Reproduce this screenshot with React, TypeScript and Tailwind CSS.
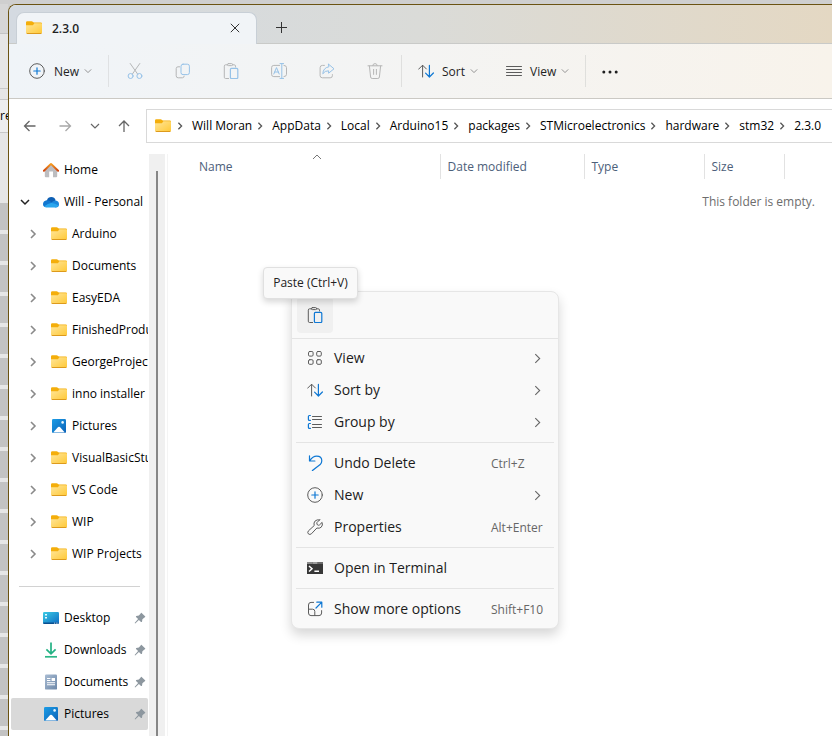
import type { ReactNode } from "react";

const GRAY = "#5c5c5c";
const BLUE = "#0f78d4";

type IconProps = { className?: string };

function FolderIcon({ className = "" }: IconProps) {
  return (
    <svg width="16" height="16" viewBox="0 0 16 16" className={"shrink-0 " + className} aria-hidden="true">
      <defs>
        <linearGradient id="folderFace" x1="0" y1="0" x2="1" y2="1">
          <stop offset="0" stopColor="#ffe69b" />
          <stop offset="1" stopColor="#ffc937" />
        </linearGradient>
      </defs>
      <path d="M0 2.6Q0 1.2 1.2 1.2H5.6Q6.3 1.2 6.8 1.7L7.8 2.6H14.8Q16 2.6 16 3.8V8H0Z" fill="#f4ae0b" />
      <path d="M0 5.2H6.2Q6.8 5.2 7.3 4.7L8.4 3.2H15Q16 3.2 16 4.1V12.6Q16 13.6 15 13.6H1Q0 13.6 0 12.6Z" fill="url(#folderFace)" />
      <path d="M0.2 12.6Q0.4 14 1.4 14H14.6Q15.6 14 15.8 12.8Q15.4 13.1 14.8 13.1H1.2Q0.6 13.1 0.2 12.6Z" fill="#dd9a1c" />
    </svg>
  );
}

function PicturesIcon() {
  return (
    <svg width="16" height="16" viewBox="0 0 16 16" className="shrink-0" aria-hidden="true">
      <defs>
        <linearGradient id="pictureSky" x1="0" y1="0" x2="1" y2="1">
          <stop offset="0" stopColor="#1c9de6" />
          <stop offset="1" stopColor="#0b62b8" />
        </linearGradient>
      </defs>
      <rect x="1" y="1" width="14" height="14" rx="1.2" fill="url(#pictureSky)" />
      <path d="M2.2 14.4L7.1 9.1Q8 8.2 8.9 9.1L13.8 14.4Z" fill="#fff" />
      <circle cx="11.6" cy="4.4" r="1.3" fill="#e8f6ff" />
    </svg>
  );
}

function HomeIcon() {
  return (
    <svg width="16" height="16" viewBox="0 0 16 16" className="shrink-0" aria-hidden="true">
      <defs>
        <linearGradient id="homeRoof" x1="0" y1="0" x2="0" y2="1">
          <stop offset="0" stopColor="#f69a1c" />
          <stop offset="1" stopColor="#cf4712" />
        </linearGradient>
      </defs>
      <path d="M1.8 7.4L8 1.8L14.2 7.4V14.2Q14.2 15.2 13.2 15.2H10V9.6H6.2V15.2H2.8Q1.8 15.2 1.8 14.2Z" fill="#bdbdc0" />
      <path d="M0.9 8.8L7.4 2.4Q8 1.9 8.6 2.4L15.1 8.8" fill="none" stroke="url(#homeRoof)" strokeWidth="2" strokeLinecap="round" />
    </svg>
  );
}

function CloudIcon() {
  return (
    <svg width="16" height="16" viewBox="0 0 16 16" className="shrink-0" aria-hidden="true">
      <path d="M3.9 6.4Q5 3.1 8.3 3.1Q11.6 3.1 12.6 6.3L9 10.5L3.5 8Z" fill="#0d5fb4" />
      <path d="M0 10.2Q0 6.6 3.8 6.2Q6.6 6 8.6 8.4L10 11L3 13.2Q0 12.8 0 10.2Z" fill="#1277d0" />
      <path d="M9 8Q10.8 6.2 12.8 6.4Q16 7 16 10.2Q16 13.4 12.8 13.4L6 11Z" fill="#1a86dc" />
      <path d="M1.2 12.3Q5 9.4 8.2 9.1Q11.6 8.9 15.6 11.6Q14.8 13.4 12.8 13.4H3.6Q2 13.4 1.2 12.3Z" fill="#2aa6ee" />
    </svg>
  );
}

function DesktopIcon() {
  return (
    <svg width="16" height="16" viewBox="0 0 16 16" className="shrink-0" aria-hidden="true">
      <defs>
        <linearGradient id="deskFill" x1="0" y1="0" x2="1" y2="1">
          <stop offset="0" stopColor="#3ccbe4" />
          <stop offset="1" stopColor="#0d6cc4" />
        </linearGradient>
      </defs>
      <rect x="0" y="2" width="16" height="12" rx="1.2" fill="url(#deskFill)" />
      <path d="M0.2 12.5H15.8Q15.8 14 14.8 14H1.2Q0.2 14 0.2 12.5Z" fill="#0a4f8f" />
      <path d="M2 4h2v1.6H2zM2 7h2v1.6H2z" fill="#e6fbff" />
      <path d="M11 12.8h1v.8h-1zM12.8 12.8h1v.8h-1zM14.4 12.8h.8v.8h-.8z" fill="#fff" />
    </svg>
  );
}

function DownloadsIcon() {
  return (
    <svg width="16" height="16" viewBox="0 0 16 16" className="shrink-0" fill="none" aria-hidden="true">
      <path d="M8 0.5V11.5M3.4 7.3L8 11.8L12.6 7.3" stroke="#22b183" strokeWidth="1.7" />
      <path d="M2 14.8H14" stroke="#2cb787" strokeWidth="1.7" />
    </svg>
  );
}

function DocumentsIcon() {
  return (
    <svg width="16" height="16" viewBox="0 0 16 16" className="shrink-0" aria-hidden="true">
      <defs>
        <linearGradient id="docFill" x1="0" y1="0" x2="1" y2="1">
          <stop offset="0" stopColor="#a9bcd3" />
          <stop offset="1" stopColor="#6c87a8" />
        </linearGradient>
      </defs>
      <rect x="2" y="0.4" width="12" height="15.2" rx="1.2" fill="url(#docFill)" />
      <path d="M4 4h3.4v1H4zM4 6h3.4v1H4zM8.6 4H12v3H8.6zM4 8.2h8v1H4zM4 10.3h8v1H4z" fill="#fff" />
    </svg>
  );
}

function PinIcon() {
  return (
    <svg width="12" height="12" viewBox="0 0 12 12" className="shrink-0" aria-hidden="true">
      <path d="M7.4 0.8L11.3 4.6Q11.4 5.4 10.5 5.4L8.4 7.2L8 9.7Q7.6 10.3 7 9.9L4.9 7.9L1.2 11.4L0.6 10.9L4.1 7.1L2 5Q1.7 4.4 2.3 4.1L4.9 3.6L6.7 1.6Q6.6 0.8 7.4 0.8Z" fill="#8d979f" />
    </svg>
  );
}

function Chevron({ dir, size = 10, color = "#6b6b6b", width = 1.2 }: { dir: "right" | "down" | "up"; size?: number; color?: string; width?: number }) {
  const d = dir === "right" ? "M3 1L7 5L3 9" : dir === "down" ? "M1 3L5 7L9 3" : "M1 7L5 3L9 7";
  return (
    <svg width={size} height={size} viewBox="0 0 10 10" className="shrink-0" fill="none" stroke={color} strokeWidth={width} aria-hidden="true">
      <path d={d} />
    </svg>
  );
}

function LineIcon({ children, className = "" }: { children: ReactNode; className?: string }) {
  return (
    <svg width="16" height="16" viewBox="0 0 16 16" fill="none" stroke={GRAY} strokeLinecap="round" strokeLinejoin="round" className={"shrink-0 " + className} aria-hidden="true">
      {children}
    </svg>
  );
}

const PlusCircle = () => (
  <LineIcon>
    <circle cx="8" cy="8" r="7.3" />
    <path d="M8 4.8V11.2M4.8 8H11.2" stroke={BLUE} strokeWidth="1.2" />
  </LineIcon>
);

const CutIcon = () => (
  <LineIcon>
    <path d="M3.2 0.5L10.6 11M12.8 0.5L5.4 11" />
    <circle cx="3.6" cy="13" r="2.5" stroke={BLUE} />
    <circle cx="12.4" cy="13" r="2.5" stroke={BLUE} />
  </LineIcon>
);

const CopyIcon = () => (
  <LineIcon>
    <path d="M4.6 3.8H3Q1.2 3.8 1.2 5.6V12.8Q1.2 14.8 3.2 14.8H7.4Q9 14.8 9.2 13.2" />
    <rect x="6" y="1.2" width="8.4" height="10.4" rx="2" stroke={BLUE} />
  </LineIcon>
);

const PasteIcon = () => (
  <LineIcon>
    <path d="M4.6 1.8H2.6Q1.3 1.8 1.3 3.1V14.2Q1.3 15.5 2.6 15.5H5.6M9.4 1.8H11.2Q12.5 1.8 12.5 3.1V4" />
    <path d="M5.4 0.6H8.6Q9.6 0.6 9.6 1.6Q9.6 2.6 8.6 2.6H5.4Q4.4 2.6 4.4 1.6Q4.4 0.6 5.4 0.6Z" />
    <rect x="7.4" y="5.4" width="7.4" height="10.1" rx="1" stroke={BLUE} strokeWidth="1.2" />
  </LineIcon>
);

const RenameIcon = () => (
  <LineIcon>
    <path d="M8.6 2.4H2.8Q0.6 2.4 0.6 4.6V11.4Q0.6 13.6 2.8 13.6H8.6M13 2.4Q15.5 2.4 15.5 4.6V11.4Q15.5 13.6 13 13.6" />
    <path d="M9 0.6H12.6M9 15.4H12.6M10.8 0.6V15.4M2.8 11L5.5 4.6L8.2 11M3.7 9H7.3" stroke={BLUE} />
  </LineIcon>
);

const ShareIcon = () => (
  <LineIcon>
    <path d="M5.4 2.4H3.4Q1.1 2.4 1.1 4.7V12.6Q1.1 14.8 3.4 14.8H11.2Q13.4 14.8 13.4 12.6V11.6" />
    <path d="M9.6 1.2L15 5.8L9.6 10.2V7.8Q5.8 7.6 3.8 10.8Q4.2 4.8 9.6 3.8Z" stroke={BLUE} />
  </LineIcon>
);

const DeleteIcon = () => (
  <LineIcon>
    <path d="M1 2.8H15M5.8 2.6Q5.8 0.6 8 0.6Q10.2 0.6 10.2 2.6M2.4 3L3.6 14Q3.8 15.5 5.2 15.5H10.8Q12.2 15.5 12.4 14L13.6 3M6.6 6.4V11.4M9.4 6.4V11.4" />
  </LineIcon>
);

const SortIcon = () => (
  <LineIcon>
    <path d="M4.6 14V2.4M0.6 6.2L4.6 2.2L8.4 6" />
    <path d="M11.4 2.4V14M7.6 10.2L11.4 14L15.4 10" stroke={BLUE} strokeWidth="1.2" />
  </LineIcon>
);

const LinesIcon = () => (
  <LineIcon>
    <path d="M0.5 3.5H15.5M0.5 6.5H15.5M0.5 9.5H15.5M0.5 12.5H15.5" />
  </LineIcon>
);

const GridIcon = () => (
  <LineIcon>
    <rect x="1.5" y="1.5" width="4.6" height="4.6" rx="1.2" />
    <rect x="9.7" y="1.5" width="4.6" height="4.6" rx="1.2" />
    <rect x="1.5" y="9.7" width="4.6" height="4.6" rx="1.2" />
    <rect x="9.7" y="9.7" width="4.6" height="4.6" rx="1.2" />
  </LineIcon>
);

const GroupIcon = () => (
  <LineIcon>
    <path d="M5.5 2.5H14.5M5.5 5.5H14.5M5.5 10.5H14.5M5.5 13.5H14.5" />
    <path d="M3.4 1.5H2.4Q1.4 1.5 1.4 2.5V5.4Q1.4 6.4 2.4 6.4H3.4M3.4 9.5H2.4Q1.4 9.5 1.4 10.5V13.4Q1.4 14.4 2.4 14.4H3.4" stroke={BLUE} strokeWidth="1.2" />
  </LineIcon>
);

const UndoIcon = () => (
  <LineIcon>
    <path d="M2.5 0.8V6H7.9M2.6 5.8Q5.8 1.1 9.6 1.1Q14.8 1.1 14.8 5.8Q14.8 8 13.2 9.6L5.4 15.6" stroke={BLUE} strokeWidth="1.2" />
  </LineIcon>
);

const WrenchIcon = () => (
  <LineIcon>
    <path d="M12.6 0.9L9.9 3.6Q9.5 5.2 10.7 6.1Q11.4 6.5 12.4 6L15.1 3.4Q16.1 6.2 14.2 8.2Q12.4 9.8 9.9 9L4.4 14.8Q2.9 16.1 1.4 14.9Q0.1 13.5 1.4 11.9L7.2 6.6Q6.3 3.8 8.2 1.9Q10.1 0.3 12.6 0.9Z" />
  </LineIcon>
);

const TerminalIcon = () => (
  <svg width="16" height="16" viewBox="0 0 16 16" className="shrink-0" aria-hidden="true">
    <path d="M0 2h16v12H0z" fill="#373737" />
    <path d="M0 2h5.4v2H0z" fill="#8a8a8a" />
    <path d="M5.4 2h5.3v2H5.4z" fill="#9b9b9b" />
    <path d="M10.7 2H16v2h-5.3z" fill="#6a6a6a" />
    <path d="M2 6L5 8.7L2 11.5M7.4 11.2H12" fill="none" stroke="#fff" strokeWidth="1.5" />
  </svg>
);

const MoreOptionsIcon = () => (
  <LineIcon>
    <path d="M6.6 1.4H4Q1.5 1.4 1.5 4V12Q1.5 14.6 4 14.6H12Q14.6 14.6 14.6 12V9.6M1.5 8.2H5.6Q7.8 8.2 7.8 10.4V14.6" />
    <path d="M9.8 1.2H14.8V6.2M14.6 1.4L9 7" stroke={BLUE} strokeWidth="1.2" />
  </LineIcon>
);

function NavArrow({ dir, color }: { dir: "left" | "right" | "up"; color: string }) {
  const d = dir === "left" ? "M13.5 8H2.5M7.5 3L2.5 8L7.5 13" : dir === "right" ? "M2.5 8H13.5M8.5 3L13.5 8L8.5 13" : "M8 14V3M3 8L8 3L13 8";
  return (
    <svg width="16" height="16" viewBox="0 0 16 16" fill="none" stroke={color} strokeWidth="1.3" aria-hidden="true">
      <path d={d} />
    </svg>
  );
}

function BackgroundEdge() {
  return (
    <div className="flex w-2 shrink-0 flex-col overflow-hidden bg-[#e6e6e6]" aria-hidden="true">
      <div className="h-[30px] shrink-0 border-b border-[#c4c4c4] bg-[#d6d6d6]" />
      <div className="h-[55px] shrink-0 border-b border-[#c8c8c8]" />
      <div className="h-[11px] shrink-0 border-b border-[#c8c8c8]" />
      <div className="h-[33px] shrink-0 border-b border-[#c8c8c8] bg-[#eeeeee] text-[12px] leading-8 text-black">re</div>
      <div className="h-[70px] shrink-0" />
      {Array.from({ length: 18 }, (_, i) => (
        <div key={i} className="mb-1 h-[27px] shrink-0 bg-[#c3c3c3]" />
      ))}
    </div>
  );
}

function TabBar() {
  return (
    <div className="flex h-[39px] items-end border-b border-[#c9cac8] bg-linear-to-r from-[#d4dae1] via-[#dadbd8] to-[#e4d8c3] pl-[7px]">
      <div className="-mb-px flex h-8 w-[241px] items-center rounded-t-lg border-x border-t border-[#c8cfd6] bg-[#f1f4f7] pr-[13px] pb-px pl-[9px]">
        <FolderIcon />
        <span className="ml-2.5 flex-1 pt-0.5 text-[12px] font-semibold text-[#1f1f1f]">2.3.0</span>
        <button aria-label="Close tab" className="flex size-4 items-center justify-center">
          <svg width="10" height="10" viewBox="0 0 10 10" stroke="#333" fill="none" aria-hidden="true">
            <path d="M0.8 0.8L9.2 9.2M9.2 0.8L0.8 9.2" />
          </svg>
        </button>
      </div>
      <button aria-label="New tab" className="ml-4 flex h-[31px] w-4 items-center justify-center">
        <svg width="11" height="11" viewBox="0 0 11 11" stroke="#333" fill="none" aria-hidden="true">
          <path d="M5.5 0V11M0 5.5H11" />
        </svg>
      </button>
    </div>
  );
}

const disabledTools = [
  { name: "Cut", icon: <CutIcon /> },
  { name: "Copy", icon: <CopyIcon /> },
  { name: "Paste", icon: <PasteIcon /> },
  { name: "Rename", icon: <RenameIcon /> },
  { name: "Share", icon: <ShareIcon /> },
  { name: "Delete", icon: <DeleteIcon /> },
];

function CommandBar() {
  return (
    <div className="flex h-[55px] items-center border-b border-[#cbc9c4] bg-linear-to-r from-[#f0f4f8] via-[#f4f4f3] to-[#f8f3eb] pl-5 text-[12px] text-[#1f1f1f]">
      <button className="flex w-[79px] items-center">
        <PlusCircle />
        <span className="ml-[9px] flex-1 pt-0.5 text-left">New</span>
        <span className="mr-4"><Chevron dir="down" size={8} color="#8f8f8f" /></span>
      </button>
      <div className="h-8 w-px bg-[#dfe1e3]" />
      <div className="flex items-center gap-8 px-[18px]">
        {disabledTools.map((t) => (
          <button key={t.name} aria-label={t.name} disabled className="opacity-40">
            {t.icon}
          </button>
        ))}
      </div>
      <div className="h-8 w-px bg-[#dfdfde]" />
      <button className="ml-4 flex w-[60px] items-center">
        <SortIcon />
        <span className="ml-2 flex-1 pt-0.5 text-left">Sort</span>
        <Chevron dir="down" size={8} color="#8f8f8f" />
      </button>
      <button className="ml-7 flex w-[63px] items-center">
        <LinesIcon />
        <span className="ml-2 flex-1 pt-0.5 text-left">View</span>
        <Chevron dir="down" size={8} color="#8f8f8f" />
      </button>
      <div className="ml-4 h-8 w-px bg-[#dfdfdc]" />
      <button aria-label="See more" className="ml-4 pt-0.5">
        <svg width="16" height="16" viewBox="0 0 16 16" fill="#1f1f1f" aria-hidden="true">
          <circle cx="1.8" cy="8" r="1.5" />
          <circle cx="8" cy="8" r="1.5" />
          <circle cx="14.2" cy="8" r="1.5" />
        </svg>
      </button>
    </div>
  );
}

const crumbs = ["Will Moran", "AppData", "Local", "Arduino15", "packages", "STMicroelectronics", "hardware", "stm32", "2.3.0"];

function AddressRow() {
  return (
    <div className="flex h-[55px] items-center overflow-hidden pb-px pl-[13px]">
      <button aria-label="Back" className="w-[35px] shrink-0"><NavArrow dir="left" color="#666" /></button>
      <button aria-label="Forward" disabled className="w-[33px] shrink-0"><NavArrow dir="right" color="#a8a8a8" /></button>
      <button aria-label="Recent locations" className="w-[26px] shrink-0"><Chevron dir="down" color="#666" /></button>
      <button aria-label="Up" className="w-[30px] shrink-0"><NavArrow dir="up" color="#666" /></button>
      <nav aria-label="Address" className="flex h-[34px] min-w-0 flex-1 items-center overflow-hidden border-y border-l border-[#d9d9d9] bg-white pl-2 text-[12px] text-black">
        <FolderIcon className="mr-px" />
        {crumbs.map((c) => (
          <span key={c} className="flex shrink-0 items-center">
            <span className="w-5 pl-1"><Chevron dir="right" size={8} color="#555" width={1.6} /></span>
            <button className="whitespace-nowrap">{c}</button>
          </span>
        ))}
      </nav>
    </div>
  );
}

const treeFolders = ["Arduino", "Documents", "EasyEDA", "FinishedProducts", "GeorgeProjects", "inno installer", "Pictures", "VisualBasicStuff", "VS Code", "WIP", "WIP Projects"];

const pinned = [
  { name: "Desktop", icon: <DesktopIcon /> },
  { name: "Downloads", icon: <DownloadsIcon /> },
  { name: "Documents", icon: <DocumentsIcon /> },
  { name: "Pictures", icon: <PicturesIcon />, selected: true },
];

function Sidebar() {
  return (
    <aside className="flex w-[159px] shrink-0 border-r border-[#f4f4f4] text-[12px] text-black">
      <div className="flex w-[140px] flex-col overflow-hidden pr-px pl-0.5">
        <button className="flex h-8 shrink-0 items-center gap-[5px] pl-8"><HomeIcon />Home</button>
        <button className="flex h-8 shrink-0 items-center gap-[5px] pl-[9px] whitespace-nowrap">
          <Chevron dir="down" color="#222" width={1.5} />
          <span className="ml-2 flex items-center gap-[5px]"><CloudIcon />Will - Personal</span>
        </button>
        {treeFolders.map((name) => (
          <button key={name} className="flex h-8 w-full shrink-0 items-center overflow-hidden pl-[17px] whitespace-nowrap">
            <Chevron dir="right" color="#8a8a8a" width={1.6} />
            <span className="ml-[13px] flex items-center gap-[5px]">
              {name === "Pictures" ? <PicturesIcon /> : <FolderIcon />}
              {name}
            </span>
          </button>
        ))}
        <div className="flex h-8 shrink-0 items-center pr-2 pl-2"><div className="h-px flex-1 bg-[#d2d2d2]" /></div>
        {pinned.map((p) => (
          <button key={p.name} className={"flex h-8 shrink-0 items-center gap-[5px] rounded-xs pr-0.5 pl-8 " + (p.selected ? "bg-[#d9d9d9]" : "")}>
            {p.icon}
            <span className="flex-1 text-left">{p.name}</span>
            <PinIcon />
          </button>
        ))}
      </div>
      <div className="flex w-4 flex-col items-center bg-[#f0f0f0] pt-[17px]">
        <div className="w-0.5 flex-1 bg-[#868686]" />
      </div>
    </aside>
  );
}

function FileList() {
  return (
    <main className="min-w-0 flex-1 text-[12px]">
      <table className="w-full table-fixed text-left">
        <colgroup>
          <col className="w-[272px]" />
          <col className="w-36" />
          <col className="w-[120px]" />
          <col className="w-20" />
          <col />
        </colgroup>
        <thead>
          <tr className="h-[25px] text-[#4c607a]">
            <th scope="col" className="relative border-r border-[#e2e2e2] p-0 pl-[31px] font-normal">
              Name
              <span className="absolute -top-0.5 left-1/2 ml-2"><Chevron dir="up" color="#777" width={1} /></span>
            </th>
            <th scope="col" className="border-r border-[#e2e2e2] p-0 pl-[7px] font-normal">Date modified</th>
            <th scope="col" className="border-r border-[#e2e2e2] p-0 pl-[7px] font-normal">Type</th>
            <th scope="col" className="border-r border-[#e2e2e2] p-0 pl-[7px] font-normal">Size</th>
            <td />
          </tr>
        </thead>
        <tbody>
          <tr>
            <td colSpan={5} className="pt-3.5 pr-[17px] text-right text-[#6d6d6d]">This folder is empty.</td>
          </tr>
        </tbody>
      </table>
    </main>
  );
}

function MenuItem({ icon, label, shortcut, submenu }: { icon: ReactNode; label: string; shortcut?: string; submenu?: boolean }) {
  return (
    <button role="menuitem" className="flex h-8 w-full items-center pr-[15px] pl-[15px] text-[14px] text-[#1c1c1c]">
      {icon}
      <span className="ml-[11px] flex-1 pb-px text-left">{label}</span>
      {shortcut && <span className="w-[52px] pt-px text-left text-[12px] whitespace-nowrap text-[#666]">{shortcut}</span>}
      {submenu && <Chevron dir="right" size={11} color="#666" width={1} />}
    </button>
  );
}

const MenuDivider = () => <div role="separator" className="mx-1 my-1 h-px bg-[#e4e4e4]" />;

function ContextMenu() {
  return (
    <div role="menu" className="absolute top-[291px] left-[291px] w-[268px] rounded-lg border border-[#e6e6e6] bg-[#f9f9f9] pb-[3px] shadow-[0_6px_12px_rgba(0,0,0,0.16)]">
      <div className="mb-[3px] flex h-[47px] items-center border-b border-[#e4e4e4] pl-[5px]">
        <button aria-label="Paste" className="flex size-9 items-center justify-center rounded bg-[#f0f0f0]">
          <PasteIcon />
        </button>
      </div>
      <MenuItem icon={<GridIcon />} label="View" submenu />
      <MenuItem icon={<SortIcon />} label="Sort by" submenu />
      <MenuItem icon={<GroupIcon />} label="Group by" submenu />
      <MenuDivider />
      <MenuItem icon={<UndoIcon />} label="Undo Delete" shortcut="Ctrl+Z" />
      <MenuItem icon={<PlusCircle />} label="New" submenu />
      <MenuItem icon={<WrenchIcon />} label="Properties" shortcut="Alt+Enter" />
      <MenuDivider />
      <MenuItem icon={<TerminalIcon />} label="Open in Terminal" />
      <MenuDivider />
      <MenuItem icon={<MoreOptionsIcon />} label="Show more options" shortcut="Shift+F10" />
    </div>
  );
}

export default function App() {
  return (
    <div className="relative flex h-screen overflow-hidden bg-[#cfcfcf] pt-1 font-['Open_Sans','Noto_Sans',sans-serif]">
      <BackgroundEdge />
      <div className="flex min-w-0 flex-1 flex-col overflow-hidden rounded-tl-lg border-t border-l border-[#6b5312] bg-white">
        <TabBar />
        <CommandBar />
        <AddressRow />
        <div className="flex min-h-0 flex-1">
          <Sidebar />
          <FileList />
        </div>
      </div>
      <ContextMenu />
      <div role="tooltip" className="absolute top-[267px] left-[263px] flex h-8 w-[95px] items-center justify-center rounded border border-[#e0e0e0] bg-[#f9f9f9] text-[12px] whitespace-nowrap text-[#222] shadow-[0_3px_6px_rgba(0,0,0,0.16)]">
        Paste (Ctrl+V)
      </div>
    </div>
  );
}
